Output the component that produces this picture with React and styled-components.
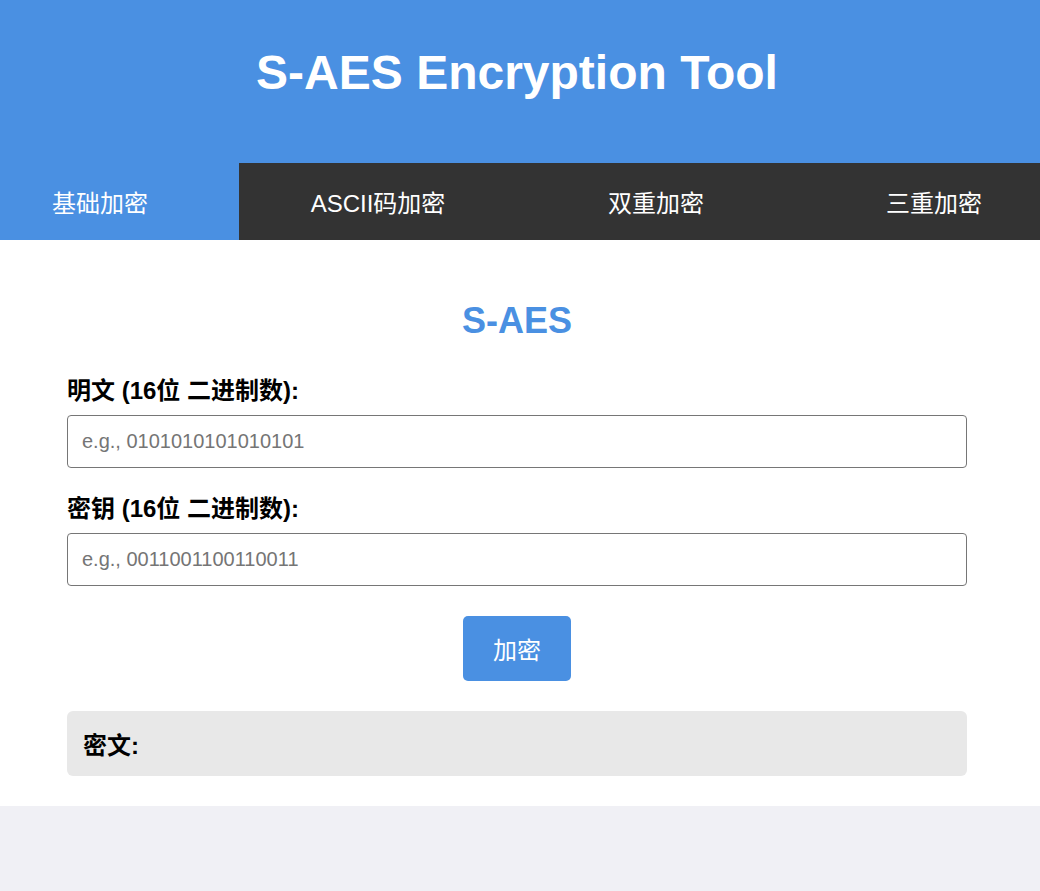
import React from 'react'
import styled, { createGlobalStyle } from 'styled-components'

const tabs = [
  { label: '基础加密', active: true },
  { label: 'ASCII码加密' },
  { label: '双重加密' },
  { label: '三重加密' },
]

const fields = [
  { label: '明文 (16位 二进制数):', placeholder: 'e.g., 0101010101010101' },
  { label: '密钥 (16位 二进制数):', placeholder: 'e.g., 0011001100110011' },
]

export default function App() {
  return (
    <>
      <GlobalStyle />
      <Header>
        <HeaderTitle>S-AES Encryption Tool</HeaderTitle>
      </Header>
      <Nav>
        {tabs.map((tab) => (
          <Tab key={tab.label} $active={tab.active}>{tab.label}</Tab>
        ))}
      </Nav>
      <Main>
        <Form>
          <SectionTitle>S-AES</SectionTitle>
          {fields.map((field) => (
            <FormGroup key={field.label}>
              <Label>{field.label}</Label>
              <Input type="text" placeholder={field.placeholder} />
            </FormGroup>
          ))}
          <ButtonRow>
            <Button>加密</Button>
          </ButtonRow>
          <Result>密文:</Result>
        </Form>
      </Main>
    </>
  )
}

const GlobalStyle = createGlobalStyle`
  html, body {
    margin: 0;
    padding: 0;
    background: #f0f0f5;
    font-family: "Liberation Sans", Arial, "Noto Sans CJK SC", sans-serif;
  }
  * {
    box-sizing: border-box;
  }
`;

const Header = styled.header`
  background: #4a90e2;
  padding: 45px 6px 62px 0;
  text-align: center;
`;

const HeaderTitle = styled.h1`
  margin: 0;
  color: #fff;
  font-size: 48px;
  line-height: 56px;
  font-weight: bold;
`;

const Nav = styled.nav`
  display: flex;
  justify-content: center;
  background: #333333;
  height: 77px;
  padding-right: 6px;
  overflow: hidden;
`;

const Tab = styled.div`
  flex: 0 0 278px;
  display: flex;
  align-items: center;
  justify-content: center;
  color: #fff;
  font-size: 24px;
  background: ${(p) => (p.$active ? '#4a90e2' : 'transparent')};
  cursor: pointer;
`;

const Main = styled.main`
  background: #fff;
  padding: 60px 6px 30px 0;
`;

const Form = styled.div`
  width: 900px;
  margin: 0 auto;
`;

const SectionTitle = styled.h2`
  margin: 0 0 36px;
  text-align: center;
  color: #4a90e2;
  font-size: 36px;
  line-height: 41px;
  font-weight: bold;
`;

const FormGroup = styled.div`
  & + & {
    margin-top: 27px;
  }
`;

const Label = styled.label`
  display: block;
  font-size: 24px;
  line-height: 28px;
  font-weight: bold;
  color: #000;
  margin-bottom: 10px;
`;

const Input = styled.input`
  display: block;
  width: 100%;
  height: 53px;
  padding: 0 14px;
  border: 1px solid #767676;
  border-radius: 4px;
  font-family: inherit;
  font-size: 20px;
  color: #000;
  outline: none;

  &::placeholder {
    color: #757575;
  }
`;

const ButtonRow = styled.div`
  display: flex;
  justify-content: center;
  margin-top: 30px;
`;

const Button = styled.button`
  height: 65px;
  padding: 0 30px;
  border: none;
  border-radius: 5px;
  background: #4a90e2;
  color: #fff;
  font-family: inherit;
  font-size: 24px;
  cursor: pointer;
`;

const Result = styled.div`
  display: flex;
  align-items: center;
  height: 65px;
  margin-top: 30px;
  padding: 0 16px;
  background: #e8e8e8;
  border-radius: 6px;
  font-size: 24px;
  font-weight: bold;
  color: #000;
`;
